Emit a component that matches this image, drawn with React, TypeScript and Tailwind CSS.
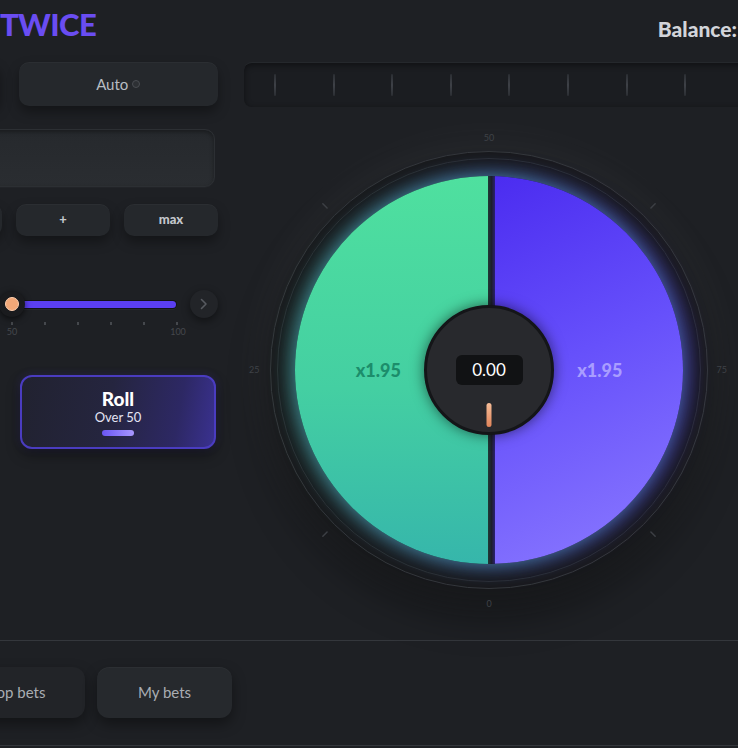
import React from "react";

const ticks = Array.from({ length: 9 });
const sliderTicks = Array.from({ length: 11 });

function Btn({ children, className = "" }: { children?: React.ReactNode; className?: string }) {
  return (
    <div
      className={
        "flex items-center justify-center rounded-[10px] bg-[#25282c] shadow-[0_6px_12px_rgba(0,0,0,0.35),inset_0_1px_0_rgba(255,255,255,0.03)] " +
        className
      }
    >
      {children}
    </div>
  );
}

export default function App() {
  return (
    <div className="w-[738px] h-[748px] overflow-hidden bg-[#1e2024] text-white flex flex-col font-['Lato','Noto_Sans',sans-serif]">
      {/* Header */}
      <header className="h-[52px] shrink-0 flex items-start justify-between">
        <div className="ml-0 mt-[9px] text-[31px] font-black leading-none text-[#6a4df2] tracking-[-0.6px]">
          TWICE
        </div>
        <div className="mt-[18px] mr-[1px] text-[21px] font-black leading-none text-[#d2d4da]">Balance:</div>
      </header>

      {/* Main */}
      <div className="flex h-[588px] pt-[10px] shrink-0">
        {/* Left column */}
        <div className="w-[218px] shrink-0">
          <div className="ml-[-200px] w-[418px] flex flex-col">
            <div className="grid grid-cols-2 gap-[19px] h-[44px]">
              <Btn />
              <Btn className="text-[15px] text-[#b8bcc2] gap-[4px]">
                <span>Auto</span>
                <span className="w-[8px] h-[8px] rounded-full border border-[#4a4d52] bg-[#2d3034]" />
              </Btn>
            </div>

            <div className="mt-[23px] mr-[3px] h-[58px] rounded-[10px] bg-[linear-gradient(180deg,#26292d,#2a2d31)] shadow-[inset_0_2px_4px_rgba(0,0,0,0.35),0_1px_0_rgba(255,255,255,0.02)] border border-[#2c2f33]" />

            <div className="mt-[17px] grid grid-cols-4 gap-[14px] h-[32px] text-[13px] font-black text-[#c3c6cb]">
              <Btn />
              <Btn />
              <Btn>+</Btn>
              <Btn>max</Btn>
            </div>

            {/* Slider */}
            <div className="mt-[54px] flex flex-col">
              <div className="flex items-center h-[28px]">
                <div className="ml-[46px] w-[332px] h-[28px] relative flex items-center">
                  <div className="w-full h-[9px] rounded-full bg-[#131417] relative shadow-[0_1px_0_rgba(255,255,255,0.04)]">
                    <div className="absolute left-0 right-1/2 top-[1px] bottom-[1px] rounded-full bg-[#2c3036]" />
                    <div className="absolute left-1/2 right-[1px] top-[1px] bottom-[1px] rounded-full bg-[#5b3ff2]" />
                  </div>
                  <div className="absolute left-1/2 top-1/2 -translate-x-1/2 -translate-y-1/2 w-[26px] h-[26px] rounded-full bg-[#1a1b1e] shadow-[0_2px_6px_rgba(0,0,0,0.6)] flex items-center justify-center">
                    <div className="w-[14px] h-[14px] rounded-full bg-[#f2a878] border border-[#ffd0b0]" />
                  </div>
                </div>
                <div className="ml-[13px] w-[28px] h-[28px] rounded-full bg-[#222428] shadow-[0_3px_8px_rgba(0,0,0,0.45)] flex items-center justify-center">
                  <svg width="8" height="12" viewBox="0 0 8 12" fill="none">
                    <path d="M1.5 1.5L6 6l-4.5 4.5" stroke="#575a60" strokeWidth="1.6" strokeLinecap="round" strokeLinejoin="round" />
                  </svg>
                </div>
              </div>
              <div className="ml-[46px] w-[332px] mt-[4px] h-[3px] flex justify-between">
                {sliderTicks.map((_, i) => (
                  <div key={i} className="w-[2px] h-[3px] bg-[#45484d]" />
                ))}
              </div>
              <div className="ml-[46px] w-[332px] mt-[2px] h-[10px] flex justify-between text-[9px] leading-[10px] text-[#45484d]">
                <div className="w-0" />
                <div className="w-0 flex justify-center"><span>50</span></div>
                <div className="w-0 flex justify-center"><span>100</span></div>
              </div>
            </div>

            {/* Roll buttons */}
            <div className="mt-[38px] grid grid-cols-2 gap-[18px] h-[74px]">
              <div className="rounded-[12px] border-2 border-[#2d6a56] bg-[linear-gradient(100deg,#1f3a33_0%,#23292d_100%)]" />
              <div className="ml-[2px] mr-[2px] rounded-[12px] border-2 border-[#4a3cc0] bg-[linear-gradient(100deg,#212230_0%,#25253f_45%,#2d2864_80%,#3a3190_100%)] shadow-[0_6px_14px_rgba(0,0,0,0.4),0_0_8px_rgba(90,70,240,0.2)] flex flex-col items-center justify-center">
                <div className="text-[19px] font-black leading-[20px] text-white">Roll</div>
                <div className="text-[13px] leading-[16px] text-[#e4e4f4]">Over 50</div>
                <div className="mt-[5px] w-[32px] h-[6px] rounded-full bg-[linear-gradient(90deg,#6a56f2,#a797ff)]" />
              </div>
            </div>
          </div>
        </div>

        {/* Right area */}
        <div className="ml-[26px] w-[490px] shrink-0 flex flex-col">
          <div className="w-[520px] h-[45px] rounded-l-[8px] bg-[#1b1d21] shadow-[inset_0_2px_6px_rgba(0,0,0,0.45)] border-t border-[#25282c] flex items-center pl-[30px] gap-[56.6px]">
            {ticks.map((_, i) => (
              <div key={i} className="w-[2px] h-[22px] rounded-full bg-[linear-gradient(180deg,#2b2e33,#3e4147,#2b2e33)]" />
            ))}
          </div>

          <div className="mt-[23px] h-[480px] relative flex items-center justify-center">
            <div className="absolute top-[3px] left-0 right-0 text-center text-[9px] leading-[10px] text-[#3f4247]">50</div>
            <div className="absolute bottom-[1px] left-0 right-0 text-center text-[9px] leading-[10px] text-[#3f4247]">0</div>
            <div className="absolute left-[5px] top-1/2 -translate-y-1/2 text-[9px] leading-[10px] text-[#3f4247]">25</div>
            <div className="absolute right-[7px] top-1/2 -translate-y-1/2 text-[9px] leading-[10px] text-[#3f4247]">75</div>
            <svg className="absolute inset-0 pointer-events-none" width="490" height="480" viewBox="0 0 490 480">
              {[45, 135, 225, 315].map((a) => {
                const r = (a * Math.PI) / 180;
                const x1 = 245 + Math.cos(r) * 229;
                const y1 = 240 + Math.sin(r) * 229;
                const x2 = 245 + Math.cos(r) * 235;
                const y2 = 240 + Math.sin(r) * 235;
                return <line key={a} x1={x1} y1={y1} x2={x2} y2={y2} stroke="#3c3f44" strokeWidth="1.5" strokeLinecap="round" />;
              })}
            </svg>

            <div className="w-[438px] h-[438px] rounded-full bg-[#1a1b1e] border border-[#35383c] shadow-[0_0_40px_12px_rgba(255,255,255,0.04),0_24px_40px_rgba(0,0,0,0.45)] flex items-center justify-center">
              <div className="w-[424px] h-[424px] rounded-full border border-[#2a2d31] bg-[#17181b] flex items-center justify-center">
                <div className="relative w-[388px] h-[388px] rounded-full overflow-hidden flex shadow-[-5px_0_20px_rgba(70,225,160,0.5),5px_0_22px_rgba(95,65,255,0.65)]">
                  <div className="flex-1 bg-[linear-gradient(180deg,#4fe09f_0%,#44cfa2_55%,#36b6ab_100%)] flex items-center justify-center pr-[26px]">
                    <span className="text-[18px] font-black text-[#1c8d6b]">x1.95</span>
                  </div>
                  <div className="w-[7px] bg-[linear-gradient(90deg,#1f3a36,#1e1e2c,#2a2270)]" />
                  <div className="flex-1 bg-[linear-gradient(155deg,#4b2cf0_0%,#6650fb_45%,#8c7bff_100%)] flex items-center justify-center pl-[22px]">
                    <span className="text-[18px] font-black text-[#a99dff]">x1.95</span>
                  </div>
                  <div className="absolute left-1/2 top-1/2 -translate-x-1/2 -translate-y-1/2 w-[130px] h-[130px] rounded-full bg-[#28292d] border-[3px] border-[#141518] shadow-[0_0_14px_rgba(0,0,0,0.55)] flex items-center justify-center">
                    <div className="w-[67px] h-[30px] rounded-[6px] bg-[#111214] flex items-center justify-center text-[17px] text-white">0.00</div>
                    <div className="absolute left-1/2 -translate-x-1/2 top-[95px] w-[5px] h-[24px] rounded-full bg-[linear-gradient(180deg,#f6bd98,#e0845a)]" />
                  </div>
                </div>
              </div>
            </div>
          </div>
        </div>
      </div>

      <div className="h-px shrink-0 bg-[#34373c]" />

      {/* Tabs */}
      <div className="h-[104px] shrink-0 pt-[26px] flex gap-[12px] ml-[-50px]">
        <div className="w-[135px] h-[51px] rounded-[12px] bg-[#222428] shadow-[0_6px_14px_rgba(0,0,0,0.4)] flex items-center justify-center text-[15px] text-[#a9adb3]">
          Top bets
        </div>
        <div className="w-[135px] h-[51px] rounded-[12px] bg-[#26292d] shadow-[0_6px_14px_rgba(0,0,0,0.4),inset_0_1px_0_rgba(255,255,255,0.03)] flex items-center justify-center text-[15px] text-[#a9adb3]">
          My bets
        </div>
      </div>
      <div className="h-px shrink-0 bg-[#34373c]" />
    </div>
  );
}
